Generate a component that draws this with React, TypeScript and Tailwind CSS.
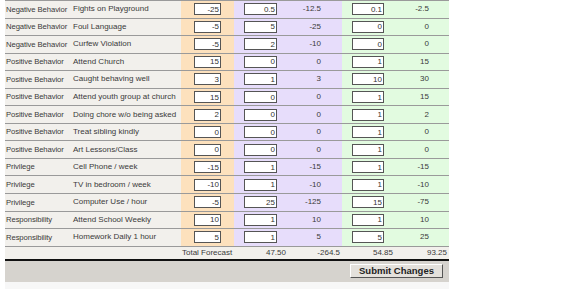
type Row = {
  cat: string;
  desc: string;
  pts: string;
  qty: string;
  sub: string;
  qty2: string;
  sub2: string;
};

const rows: Row[] = [
  { cat: "Negative Behavior", desc: "Fights on Playground", pts: "-25", qty: "0.5", sub: "-12.5", qty2: "0.1", sub2: "-2.5" },
  { cat: "Negative Behavior", desc: "Foul Language", pts: "-5", qty: "5", sub: "-25", qty2: "0", sub2: "0" },
  { cat: "Negative Behavior", desc: "Curfew Violation", pts: "-5", qty: "2", sub: "-10", qty2: "0", sub2: "0" },
  { cat: "Positive Behavior", desc: "Attend Church", pts: "15", qty: "0", sub: "0", qty2: "1", sub2: "15" },
  { cat: "Positive Behavior", desc: "Caught behaving well", pts: "3", qty: "1", sub: "3", qty2: "10", sub2: "30" },
  { cat: "Positive Behavior", desc: "Attend youth group at church", pts: "15", qty: "0", sub: "0", qty2: "1", sub2: "15" },
  { cat: "Positive Behavior", desc: "Doing chore w/o being asked", pts: "2", qty: "0", sub: "0", qty2: "1", sub2: "2" },
  { cat: "Positive Behavior", desc: "Treat sibling kindly", pts: "0", qty: "0", sub: "0", qty2: "1", sub2: "0" },
  { cat: "Positive Behavior", desc: "Art Lessons/Class", pts: "0", qty: "0", sub: "0", qty2: "1", sub2: "0" },
  { cat: "Privilege", desc: "Cell Phone / week", pts: "-15", qty: "1", sub: "-15", qty2: "1", sub2: "-15" },
  { cat: "Privilege", desc: "TV in bedroom / week", pts: "-10", qty: "1", sub: "-10", qty2: "1", sub2: "-10" },
  { cat: "Privilege", desc: "Computer Use / hour", pts: "-5", qty: "25", sub: "-125", qty2: "15", sub2: "-75" },
  { cat: "Responsibility", desc: "Attend School Weekly", pts: "10", qty: "1", sub: "10", qty2: "1", sub2: "10" },
  { cat: "Responsibility", desc: "Homework Daily 1 hour", pts: "5", qty: "1", sub: "5", qty2: "5", sub2: "25" },
];

const cols = "grid grid-cols-[67px_109px_53px_53px_55px_52px_55px]";

function Box({ value, w }: { value: string; w: string }) {
  return (
    <input
      readOnly
      value={value}
      className={`${w} h-[12px] border border-[#555] bg-white text-right pr-[1px] text-[8px] leading-none text-[#333] font-['Liberation_Sans',Arial,sans-serif] outline-none`}
    />
  );
}

export default function App() {
  return (
    <div className="w-[576px] h-[290px] bg-white font-['Liberation_Sans',Arial,sans-serif] text-[8px] text-[#3a3a3a]">
      <div className="ml-[5px] w-[444px] bg-[#f7f7f7]">
        <div className="border-t border-[#9a9a9a]">
          {rows.map((r, i) => (
            <div key={i} className={`${cols} h-[17.55px] border-b border-[#9a9a9a]`}>
              <div className="bg-[#f2f0ec] flex items-center pl-[1px] whitespace-nowrap text-[7.7px] tracking-[-0.1px]">{r.cat}</div>
              <div className="bg-[#f2f0ec] flex items-center pl-[1px] whitespace-nowrap">{r.desc}</div>
              <div className="bg-[#fde1bd] flex items-center justify-center">
                <Box value={r.pts} w="w-[27px]" />
              </div>
              <div className="bg-[#e7ddfb] flex items-center pl-[10px]">
                <Box value={r.qty} w="w-[33px]" />
              </div>
              <div className="bg-[#e7ddfb] flex items-center justify-end pr-[21px]">{r.sub}</div>
              <div className="bg-[#e2fbe0] flex items-center pl-[10px]">
                <Box value={r.qty2} w="w-[32px]" />
              </div>
              <div className="bg-[#e2fbe0] flex items-center justify-end pr-[20px]">{r.sub2}</div>
            </div>
          ))}
        </div>
        <div className={`${cols} h-[14px] bg-[#f2f0ec] border-b-2 border-[#111] items-center`}>
          <div />
          <div />
          <div className="whitespace-nowrap pl-[1px]">Total Forecast</div>
          <div className="text-right pr-[1px]">47.50</div>
          <div className="text-right pr-[2px]">-264.5</div>
          <div className="text-right pr-[1px]">54.85</div>
          <div className="text-right pr-[2px]">93.25</div>
        </div>
        <div className="h-[21px] bg-[#d6d3ce] flex items-center justify-end pr-[6px]">
          <button className="w-[93px] h-[14px] bg-[#e4e1dc] border border-t-white border-l-white border-r-[#555] border-b-[#555] text-[9.5px] font-bold text-[#222] leading-none font-['Liberation_Sans',Arial,sans-serif]">
            Submit Changes
          </button>
        </div>
        <div className="h-[7px]" />
      </div>
    </div>
  );
}
